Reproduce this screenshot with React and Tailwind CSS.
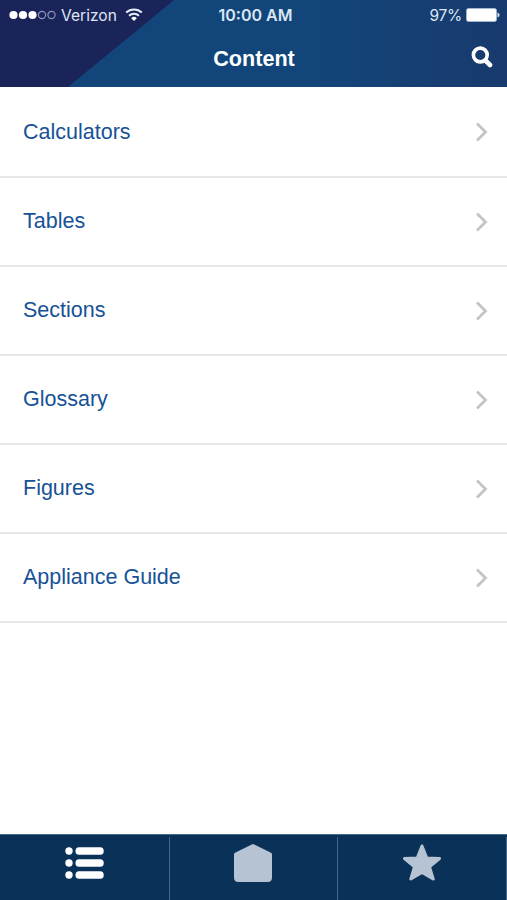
const items = ['Calculators', 'Tables', 'Sections', 'Glossary', 'Figures', 'Appliance Guide'];

function StatusBar() {
  return (
    <div className="flex h-[30px] items-center font-['Inter',sans-serif] text-[#dbe6f4]">
      <div className="flex flex-1 items-center pl-[9px]">
        <svg width="47" height="10" viewBox="0 0 47 10">
          <g fill="#fff">
            <circle cx="4.5" cy="5" r="4.1" />
            <circle cx="14" cy="5" r="4.1" />
            <circle cx="23.5" cy="5" r="4.1" />
          </g>
          <g fill="none" stroke="#8a94bd" strokeWidth="1.2">
            <circle cx="33" cy="5" r="3.6" />
            <circle cx="42.5" cy="5" r="3.6" />
          </g>
        </svg>
        <span className="ml-[5px] w-[57px] pt-px text-[15.6px] whitespace-nowrap">Verizon</span>
        <svg className="ml-[7px]" width="18" height="14" viewBox="0 0 18 14" fill="none" stroke="#e4eefb" strokeWidth="2.1">
          <path d="M1.2 4.6a11.2 11.2 0 0 1 15.6 0" />
          <path d="M4.1 7.8a7 7 0 0 1 9.8 0" />
          <path d="M9 13 6.2 10.2a4 4 0 0 1 5.600 0z" fill="#fff" stroke="none" />
        </svg>
      </div>
      <span className="pl-[2px] text-[16px] font-semibold">10:00 AM</span>
      <div className="flex flex-1 items-center justify-end pr-[7px]">
        <span className="pt-px text-[15.5px] tracking-[-0.3px]">97%</span>
        <svg className="ml-[4px]" width="34" height="14" viewBox="0 0 34 14">
          <rect x="0.5" y="0.5" width="30" height="13" rx="2" fill="#fff" stroke="#9fb6cf" />
          <path d="M31.5 4.5c1.3.4 2 1.300 2 2.500s-.7 2.100-2 2.500z" fill="#dbe6f4" />
        </svg>
      </div>
    </div>
  );
}

function Header() {
  return (
    <header className="relative h-[87px] shrink-0 overflow-hidden bg-linear-to-r from-[#12467a] from-60% to-[#183a6e]">
      <svg className="absolute top-0 left-0" width="175" height="87" viewBox="0 0 175 87">
        <path d="M0 0H174L68 87H0z" fill="#1b2459" />
      </svg>
      <div className="relative">
        <StatusBar />
        <div className="grid h-[57px] grid-cols-[1fr_auto_1fr] items-center">
          <h1 className="col-start-2 pl-px text-[21.6px] leading-none font-bold text-white">Content</h1>
          <button type="button" aria-label="Search" className="mr-[14px] mb-[3px] justify-self-end">
            <svg width="22" height="22" viewBox="0 0 22 22" fill="none" stroke="#fff">
              <circle cx="9.300" cy="9" r="6.900" strokeWidth="3.600" />
              <path d="M14.500 14.500l4.500 4.500" strokeWidth="4.600" strokeLinecap="round" />
            </svg>
          </button>
        </div>
      </div>
    </header>
  );
}

function Row({ label }) {
  return (
    <li className="group flex h-[89px] items-center justify-between border-b-2 border-[#e7e7e8] pr-[19px] pl-[23px] first:h-[91px]">
      <span className="mb-[2px] text-[21.5px] leading-[22px] text-[#165296] group-first:mb-0">{label}</span>
      <svg width="13" height="20" viewBox="0 0 13 20" fill="none" stroke="#c4c4c6" strokeWidth="2.800">
        <path d="M2 1.500l8.500 8.500L2 18.500" />
      </svg>
    </li>
  );
}

function TabBar() {
  return (
    <nav className="h-[66px] shrink-0 border-t border-[#48688a] bg-[#0a3158]">
      <div className="grid h-full grid-cols-[170px_168px_1fr] pt-[2px]">
        <button type="button" aria-label="Content" className="flex justify-center border-r border-[#48688a] pt-[9px]">
          <svg width="39" height="34" viewBox="0 0 39 34" fill="#fff">
            <circle cx="4" cy="5" r="3.700" />
            <circle cx="4" cy="17" r="3.700" />
            <circle cx="4" cy="29" r="3.700" />
            <rect x="10.500" y="1.200" width="28.200" height="7.600" rx="3.500" />
            <rect x="10.500" y="13.200" width="28.200" height="7.600" rx="3.500" />
            <rect x="10.500" y="25.200" width="28.200" height="7.600" rx="3.500" />
          </svg>
        </button>
        <button type="button" aria-label="Home" className="flex justify-center border-r border-[#48688a] pt-[7px] pr-px">
          <svg width="38" height="38" viewBox="0 0 38 38" fill="#b6c3d2">
            <path d="M17.800.4q1.200-.6 2.400 0L37 8.700q1 .5 1 1.500V33.500q0 4.500-4.500 4.500H4.500Q0 38 0 33.500V10.200q0-1 1-1.500z" />
          </svg>
        </button>
        <button type="button" aria-label="Favorites" className="flex justify-center border-r border-[#48688a] pt-[7px] pr-px">
          <svg width="38" height="38" viewBox="0 0 38 38" fill="#b6c3d2" stroke="#b6c3d2" strokeWidth="3" strokeLinejoin="round">
            <path d="M19 2l4.700 11.900 12.800.6-10 8.300 3.700 12.200L19 28.500 7.800 35l3.700-12.200-10-8.300 12.800-.6z" />
          </svg>
        </button>
      </div>
    </nav>
  );
}

export default function App() {
  return (
    <div className="flex h-screen flex-col bg-white font-['Liberation_Sans',Arial,sans-serif]">
      <Header />
      <ul className="flex-1">
        {items.map((label) => (
          <Row key={label} label={label} />
        ))}
      </ul>
      <TabBar />
    </div>
  );
}
